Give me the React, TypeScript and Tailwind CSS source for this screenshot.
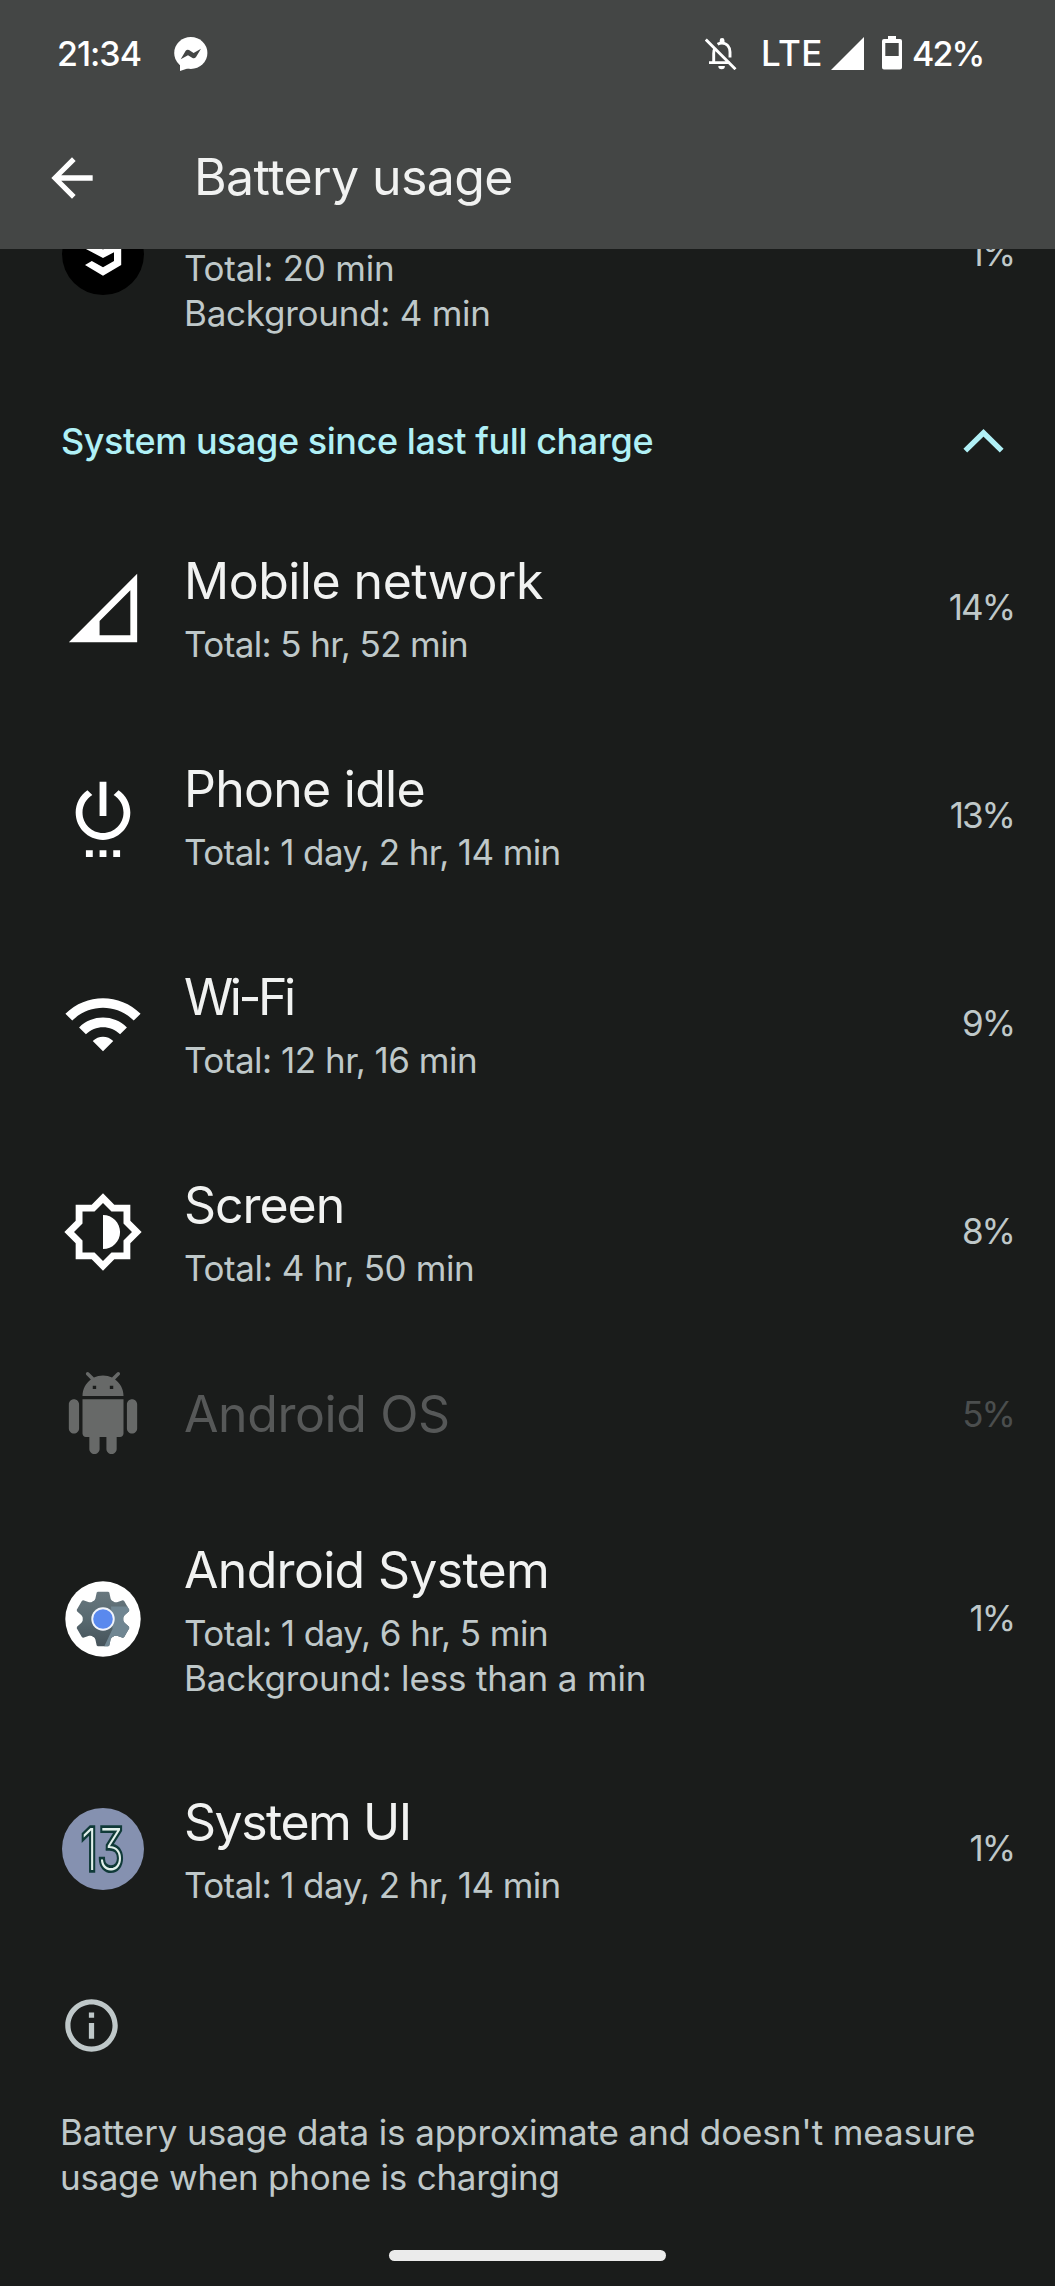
import type { ReactNode } from "react";

type UsageItem = {
  title?: string;
  titleClass?: string;
  lines?: { text: string; className?: string }[];
  percent: string;
  icon: ReactNode;
  rowClass: string;
  disabled?: boolean;
};

function GlyphIcon({ d, className }: { d: string; className?: string }) {
  return (
    <svg viewBox="0 0 24 24" className={className ?? "size-[82px]"} fill="currentColor" fillRule="evenodd">
      <path d={d} />
    </svg>
  );
}

function NineGagIcon() {
  return (
    <svg viewBox="0 0 82 82" className="size-[82px]">
      <circle cx="41" cy="41" r="41" fill="#000" />
      <path
        fill="#fff"
        fillRule="evenodd"
        d="M23 35.5 41 45l11-5.7V48l-11 6.3L29.8 48 23 52l18 10.7L59.2 52V20L41 10 23 20zM32 31l9 5.6L50 31l-9-5z"
      />
    </svg>
  );
}

function AndroidSystemIcon() {
  return (
    <svg viewBox="-41 -41 82 82" className="size-[82px]">
      <defs>
        <linearGradient id="gear" x1="0" y1="-27" x2="0" y2="27" gradientUnits="userSpaceOnUse">
          <stop offset="0" stopColor="#68777e" />
          <stop offset="0.5" stopColor="#586970" />
          <stop offset="1" stopColor="#46535a" />
        </linearGradient>
        <clipPath id="gear-shape">
          <circle r="20.3" />
          {[0, 60, 120, 180, 240, 300].map((angle) => (
            <path key={angle} d="M-5.2-27.3H5.2L6.3-26.4 7.6-20.5Q8.2-18.5 10-17.5H-10Q-8.2-18.5-7.6-20.5L-6.3-26.4z" transform={`rotate(${angle})`} />
          ))}
        </clipPath>
      </defs>
      <circle r="37.7" fill="#fff" />
      <g clipPath="url(#gear-shape)">
        <rect x="-30" y="-30" width="60" height="60" fill="url(#gear)" />
        <path d="M8-12.5H30V30H0L9.5 10z" fill="#708692" />
      </g>
      <circle r="11.7" fill="#f1f4fb" />
      <circle r="9.8" fill="#5a89ee" />
    </svg>
  );
}

function SystemUiIcon() {
  return (
    <svg viewBox="0 0 82 82" className="size-[82px]">
      <circle cx="41" cy="41" r="41" fill="#8591b0" />
      <text
        x="19"
        y="62"
        textLength="43"
        lengthAdjust="spacingAndGlyphs"
        className="font-['Inter'] text-[57px] font-extralight"
        style={{ fontFeatureSettings: '"cv09"' }}
        fill="#e3f1ec"
        stroke="#103a38"
        strokeWidth="5.4"
        paintOrder="stroke"
      >
        13
      </text>
    </svg>
  );
}

const ICONS = {
  back: "M20 10.9H7.83l5.59-5.49L12 4l-8 8 8 8 1.41-1.41L7.83 13.1H20z",
  mobile: "M2 22h20V2zM20 20h-9v-4.2l9-9z",
  idle: "M7 24h2v-2H7zM11 24h2v-2h-2zM13 2h-2v10h2zM16.56 4.44l-1.45 1.45C16.84 6.94 18 8.83 18 11c0 3.31-2.69 6-6 6s-6-2.69-6-6c0-2.17 1.16-4.06 2.88-5.12L7.44 4.44C5.36 5.88 4 8.28 4 11c0 4.42 3.58 8 8 8s8-3.58 8-8c0-2.72-1.36-5.12-3.44-6.56zM15 24h2v-2h-2z",
  wifi: "M1 9l2 2c4.97-4.97 13.03-4.97 18 0l2-2C16.93 2.93 7.08 2.93 1 9zm8 8l3 3 3-3c-1.65-1.66-4.34-1.66-6 0zm-4-4l2 2c2.76-2.76 7.24-2.76 10 0l2-2C15.14 9.14 8.87 9.14 5 13z",
  screen: "M20 15.31L23.31 12 20 8.69V4h-4.69L12 .69 8.69 4H4v4.69L.69 12 4 15.31V20h4.69L12 23.31 15.31 20H20zM18 14.48V18h-3.52L12 20.48 9.52 18H6v-3.52L3.52 12 6 9.52V6h3.52L12 3.52 14.48 6H18v3.52L20.48 12zM12 7v10c2.76 0 5-2.24 5-5s-2.24-5-5-5z",
  android: "M6 18c0 .55.45 1 1 1h1v3.5c0 .83.67 1.5 1.5 1.5s1.5-.67 1.5-1.5V19h2v3.5c0 .83.67 1.5 1.5 1.5s1.5-.67 1.5-1.5V19h1c.55 0 1-.45 1-1V8H6v10zM3.5 8C2.67 8 2 8.67 2 9.5v7c0 .83.67 1.5 1.5 1.5S5 17.33 5 16.5v-7C5 8.67 4.33 8 3.5 8zm17 0c-.83 0-1.5.67-1.5 1.5v7c0 .83.67 1.5 1.5 1.5s1.5-.67 1.5-1.5v-7c0-.83-.67-1.5-1.5-1.5zm-4.97-5.84l1.3-1.3c.2-.2.2-.51 0-.71-.2-.2-.51-.2-.71 0l-1.48 1.48C13.85 1.23 12.95 1 12 1c-.96 0-1.86.23-2.66.63L7.85.15c-.2-.2-.51-.2-.71 0-.2.2-.2.51 0 .71l1.31 1.31C6.97 3.26 6 5.01 6 7h12c0-1.99-.97-3.75-2.47-4.84zM10 5H9V4h1v1zm5 0h-1V4h1v1z",
  info: "M11 7h2v2h-2zm0 4h2v6h-2zm1-9C6.48 2 2 6.48 2 12s4.48 10 10 10 10-4.48 10-10S17.52 2 12 2zm0 18c-4.41 0-8-3.59-8-8s3.59-8 8-8 8 3.59 8 8-3.59 8-8 8z",
};

const items: UsageItem[] = [
  {
    title: "Mobile network",
    titleClass: "tracking-[-0.51px]",
    lines: [{ text: "Total: 5 hr, 52 min", className: "tracking-[-0.6px]" }],
    percent: "14%",
    icon: <GlyphIcon d={ICONS.mobile} />,
    rowClass: "h-[208px]",
  },
  {
    title: "Phone idle",
    titleClass: "tracking-[-0.73px]",
    lines: [{ text: "Total: 1 day, 2 hr, 14 min", className: "tracking-[-0.61px]" }],
    percent: "13%",
    icon: <GlyphIcon d={ICONS.idle} />,
    rowClass: "h-[208px]",
  },
  {
    title: "Wi-Fi",
    titleClass: "tracking-[-3.5px]",
    lines: [{ text: "Total: 12 hr, 16 min", className: "tracking-[-0.5px]" }],
    percent: "9%",
    icon: <GlyphIcon d={ICONS.wifi} />,
    rowClass: "h-[208px]",
  },
  {
    title: "Screen",
    titleClass: "tracking-[-1.05px]",
    lines: [{ text: "Total: 4 hr, 50 min", className: "tracking-[-0.38px]" }],
    percent: "8%",
    icon: <GlyphIcon d={ICONS.screen} />,
    rowClass: "h-[208px]",
  },
  {
    title: "Android OS",
    titleClass: "tracking-[-0.41px]",
    percent: "5%",
    icon: <GlyphIcon d={ICONS.android} />,
    rowClass: "h-[157px] pb-[3px]",
    disabled: true,
  },
  {
    title: "Android System",
    titleClass: "tracking-[-0.69px]",
    lines: [
      { text: "Total: 1 day, 6 hr, 5 min", className: "tracking-[-0.53px]" },
      { text: "Background: less than a min", className: "tracking-[-0.14px]" },
    ],
    percent: "1%",
    icon: <AndroidSystemIcon />,
    rowClass: "h-[252px]",
  },
  {
    title: "System UI",
    titleClass: "tracking-[-1.5px]",
    lines: [{ text: "Total: 1 day, 2 hr, 14 min", className: "tracking-[-0.61px]" }],
    percent: "1%",
    icon: <SystemUiIcon />,
    rowClass: "h-[208px]",
  },
];

function UsageRow({ item }: { item: UsageItem }) {
  return (
    <div className={`flex shrink-0 items-center pl-[61px] pr-[41px] ${item.rowClass}`}>
      <div className={`-mt-[2px] mr-[40px] flex w-[83px] justify-center ${item.disabled ? "text-[#676968]" : "text-white"}`}>{item.icon}</div>
      <div className="flex-1 whitespace-nowrap">
        {item.title && (
          <h2 className={`text-[50px] leading-[60px] ${item.disabled ? "text-[#565858]" : "text-[#f1f2f1]"} ${item.titleClass ?? ""}`}>{item.title}</h2>
        )}
        {item.lines && (
          <div className={`text-[35px] leading-[45px] text-[#bfc8c9] ${item.title ? "mt-[11px]" : "mt-[71px]"}`}>
            {item.lines.map((line) => (
              <p key={line.text} className={line.className}>{line.text}</p>
            ))}
          </div>
        )}
      </div>
      <span className={`text-[35px] leading-[45px] tracking-[-2px] ${item.disabled ? "text-[#4b4e4e]" : "-mt-[3px] text-[#bfc8c9]"}`}>{item.percent}</span>
    </div>
  );
}

function StatusBar() {
  return (
    <div className="flex h-[106px] items-center justify-between pl-[57px] pr-[71px] text-[34px] font-medium text-white">
      <div className="flex items-center">
        <span className="w-[117px] tracking-[-1px]">21:34</span>
        <svg viewBox="0 0 34 34" className="mt-[2px] size-[34px]">
          <ellipse cx="16.8" cy="16" rx="16.6" ry="15.9" fill="#fff" />
          <path d="M6 24v10l9-3z" fill="#fff" />
          <path d="M6.7 22.3 11.7 13.8Q13 12.2 15 13l4.6 3L27 11.7 22 20Q20.5 22 18.5 21L14 18.2z" fill="#444645" />
        </svg>
      </div>
      <div className="flex items-center">
        <svg viewBox="0 0 32 32" className="mr-[24px] mt-[2px] size-[32px]" fill="none" stroke="#fff" strokeWidth="2.9">
          <path d="M.8 1.5 30.5 31.2M4 24.6h21M8.7 24.6V15.5c0-2.6.6-4.6 1.9-6.2M12.6 6.3C14 5.4 15.4 5.1 17 5.1c4.8 0 8 3.8 8 8.8v5.6" />
          <path d="M13.3 28h6.6a3.3 3.3 0 0 1-6.6 0zM14.7 5V2.4a2.4 2.4 0 0 1 4.8 0V5z" fill="#fff" stroke="none" />
        </svg>
        <span className="w-[70px] text-[35px] tracking-[0.4px]">LTE</span>
        <svg viewBox="0 0 33 33" className="mr-[18px] size-[33px]">
          <path d="M0 33H33V0z" fill="#fff" />
        </svg>
        <svg viewBox="0 0 20 34" className="mr-[10px] h-[34px] w-[20px]">
          <path
            d="M6 0h8v3h4a2 2 0 0 1 2 2v26.500a2 2 0 0 1-2 2H2a2 2 0 0 1-2-2V5a2 2 0 0 1 2-2h4zM3.300 7v13h13.400V7z"
            fill="#fff"
            fillRule="evenodd"
          />
        </svg>
        <span className="w-[72px] tracking-[-1.9px]">42%</span>
      </div>
    </div>
  );
}

export default function App() {
  return (
    <main className="flex h-[2286px] w-[1055px] flex-col overflow-hidden bg-[#1a1c1b] font-['Inter',sans-serif]">
      <header className="z-10 h-[249px] shrink-0 bg-[#444645]">
        <StatusBar />
        <div className="flex h-[143px] items-center pl-[41px]">
          <GlyphIcon d={ICONS.back} className="size-[62px] text-white" />
          <h1 className="-mt-[2px] ml-[91px] text-[50px] leading-[60px] tracking-[-0.6px] text-[#f1f2f1]">Battery usage</h1>
        </div>
      </header>

      {/* this row is scrolled halfway under the app bar */}
      <div className="-mt-[121px] shrink-0">
        <UsageRow
          item={{
            lines: [
              { text: "Total: 20 min", className: "tracking-[-0.25px]" },
              { text: "Background: 4 min", className: "tracking-[-0.25px]" },
            ],
            percent: "1%",
            icon: <NineGagIcon />,
            rowClass: "h-[254px]",
          }}
        />
      </div>

      <div className="flex h-[123px] shrink-0 items-center justify-between pb-[5px] pl-[61px] pr-[51px] text-[#b0f0f6]">
        <h2 className="text-[36px] font-medium leading-[45px] tracking-[-0.44px]">System usage since last full charge</h2>
        <svg viewBox="0 0 41 24" className="h-[24px] w-[41px]" fill="none" stroke="currentColor" strokeWidth="5.4">
          <path d="M2.300 21.700 20.500 3.800 38.700 21.700" />
        </svg>
      </div>

      {items.map((item) => (
        <UsageRow key={item.title} item={item} />
      ))}

      <footer className="pl-[60px] pt-[40px] text-[#bfc8c9]">
        <GlyphIcon d={ICONS.info} className="size-[63px]" />
        <p className="mt-[53px] w-[940px] text-[35px] leading-[45px] tracking-[-0.1px]">
          Battery usage data is approximate and doesn't measure
          <br />
          <span className="tracking-[-0.25px]">usage when phone is charging</span>
        </p>
      </footer>
      <div className="mx-auto mb-[25px] mt-auto h-[11px] w-[277px] shrink-0 rounded-full bg-[#ebebeb]" />
    </main>
  );
}
